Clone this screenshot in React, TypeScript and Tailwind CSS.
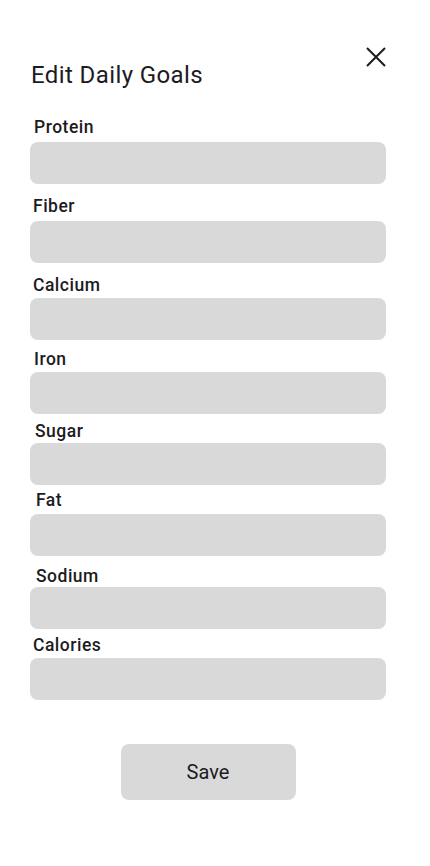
const fields = [
  { label: "Protein", labelMt: "mt-[28px]", gap: "mt-[5px]", pl: "pl-[4px]" },
  { label: "Fiber", labelMt: "mt-[12px]", gap: "mt-[5px]", pl: "pl-[3px]" },
  { label: "Calcium", labelMt: "mt-[12px]", gap: "mt-[3px]", pl: "pl-[3px]" },
  { label: "Iron", labelMt: "mt-[9px]", gap: "mt-[3px]", pl: "pl-[4px]" },
  { label: "Sugar", labelMt: "mt-[7px]", gap: "mt-[2px]", pl: "pl-[5px]" },
  { label: "Fat", labelMt: "mt-[5px]", gap: "mt-[4px]", pl: "pl-[6px]" },
  { label: "Sodium", labelMt: "mt-[10px]", gap: "mt-[1px]", pl: "pl-[6px]" },
  { label: "Calories", labelMt: "mt-[6px]", gap: "mt-[3px]", pl: "pl-[3px]" },
];

export default function App() {
  return (
    <div className="min-h-[866px] w-[430px] bg-white font-['Roboto',sans-serif] text-[#1c1b1f]">
      <div className="ml-[30px] w-[356px]">
        <div className="flex items-start justify-between pt-[44px]">
          <h1 className="mt-[17px] pl-[1px] text-[24px] leading-[28px] font-normal tracking-[0.4px]">Edit Daily Goals</h1>
          <button className="-mr-[3px] h-[26px] w-[26px]" aria-label="Close">
            <svg viewBox="0 0 26 26" width="26" height="26" fill="none" stroke="currentColor" strokeWidth="2">
              <path d="M4 4 L22 22 M22 4 L4 22" />
            </svg>
          </button>
        </div>

        {fields.map((f) => (
          <div key={f.label}>
            <div className={`${f.labelMt} ${f.pl} text-[17.5px] leading-[20px] font-medium tracking-[0.5px]`}>{f.label}</div>
            <div className={`${f.gap} h-[42px] rounded-[8px] bg-[#d9d9d9]`} />
          </div>
        ))}

        <button className="mx-auto mt-[44px] flex h-[56px] w-[175px] items-center justify-center rounded-[8px] bg-[#d9d9d9] text-[20px] leading-none">
          Save
        </button>
      </div>
    </div>
  );
}
